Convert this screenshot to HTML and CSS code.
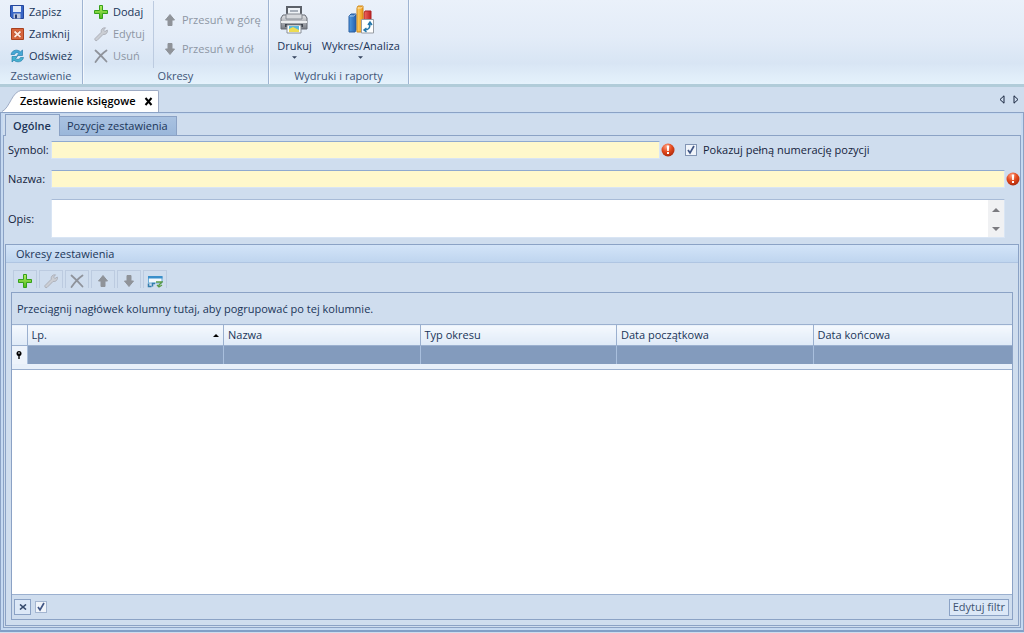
FILE: index.html
```html
<!DOCTYPE html>
<html lang="pl">
<head>
<meta charset="utf-8">
<title>Zestawienie księgowe</title>
<link rel="stylesheet" href="styles.css">
</head>
<body>
<svg class="defs" aria-hidden="true">
  <defs>
    <linearGradient id="green" x2="0" y2="1"><stop stop-color="#b5ee62"/><stop offset="1" stop-color="#4fb91c"/></linearGradient>
    <linearGradient id="blue" x2="1" y2="0"><stop stop-color="#4f9be2"/><stop offset="1" stop-color="#2560ae"/></linearGradient>
    <linearGradient id="gold" x2="1" y2="0"><stop stop-color="#ffd269"/><stop offset="1" stop-color="#ed9a18"/></linearGradient>
    <linearGradient id="redbar" x2="1" y2="0"><stop stop-color="#f16a62"/><stop offset="1" stop-color="#bd2020"/></linearGradient>
    <linearGradient id="metal" x2="0" y2="1"><stop stop-color="#e3e5e8"/><stop offset="1" stop-color="#777c84"/></linearGradient>
    <radialGradient id="ball" cx=".4" cy=".25" r=".8"><stop stop-color="#ffa183"/><stop offset=".5" stop-color="#e34a1e"/><stop offset="1" stop-color="#a52508"/></radialGradient>
    <symbol id="plus" viewBox="0 0 16 16"><path d="M6.500 1.500h3v5h5v3h-5v5h-3v-5h-5v-3h5z" fill="url(#green)" stroke="#35a01b"/></symbol>
    <symbol id="wrench" viewBox="0 0 16 16"><path d="M2 12.500 8.200 6.300C7.800 3.500 9.500 1.500 12.500 1.800L10.600 4l1.200 1.600L14.300 4c.6 3-1.500 4.900-4.200 4.400L4 14.500c-1.500.7-2.600-.6-2-2z" fill="#cbced4" stroke="#a9adb6" stroke-width=".9"/></symbol>
    <symbol id="cross" viewBox="0 0 16 16"><path d="M2.500 2.500C6 5.500 10 9.500 13.500 13.500M13.500 2.500C9 5.500 6 9 2.500 14" fill="none" stroke="#8f939b" stroke-width="1.800" stroke-linecap="round"/></symbol>
    <symbol id="up" viewBox="0 0 16 16"><path d="M8 2.500 12.500 8H10v5.500H6V8H3.500z" fill="#8f9399" stroke="#8f9399" stroke-linejoin="round"/></symbol>
    <symbol id="down" viewBox="0 0 16 16"><path d="M8 13.500 12.500 8H10V2.500H6V8H3.500z" fill="#8f9399" stroke="#8f9399" stroke-linejoin="round"/></symbol>
    <symbol id="alert" viewBox="0 0 14 14"><circle cx="7" cy="7" r="6.500" fill="url(#ball)"/><path d="M5.800 2.500h2.400L7.800 8H6.200zM6 9h2v2H6z" fill="#fff"/></symbol>
    <symbol id="caret" viewBox="0 0 6 4"><path d="M0 0h6L3 3z" fill="#33425c"/></symbol>
  </defs>
</svg>

<div class="app">
  <header class="ribbon">
    <section class="group group-report">
      <div class="commands">
        <div class="stack">
          <button class="cmd"><svg class="icon" viewBox="0 0 16 16"><path d="M1.500 1.500h13v13H3.500l-2-2z" fill="#3765c5" stroke="#24469c"/><path d="M4 2h8v6H4z" fill="#e3ebf8"/><path d="M4.500 9.500h7v5h-7z" fill="#bdc7dc"/><path d="M6 10.500h2v4H6z" fill="#253d75"/></svg>Zapisz</button>
          <button class="cmd"><svg class="icon" viewBox="0 0 16 16"><path d="M2.500 2.500h12v11h-12z" fill="#d7653d" stroke="#a8411f"/><path d="M5.500 5.500l6 5.500M11.500 5.500l-6 5.500" stroke="#a8411f" stroke-width="3"/><path d="M5.500 5.500l6 5.500M11.500 5.500l-6 5.500" stroke="#ffe9df" stroke-width="1.800"/></svg>Zamknij</button>
          <button class="cmd"><svg class="icon" viewBox="0 0 16 16"><path d="M2 6.500C3 1.800 8.500 1 11.500 3.800L13.500 2v5.500H8l2-2C8 4 6.200 4.500 5.500 6.500z" fill="#45a8d6" stroke="#267fae" stroke-width=".7"/><path d="M14.500 9.500c-1 4.700-6.500 5.500-9.500 2.700L3 14V8.500h5.500l-2 2c2 1.500 4.300 1 5-1z" fill="#45b2d0" stroke="#267fae" stroke-width=".7"/></svg>Odśwież</button>
        </div>
      </div>
      <h2 class="caption">Zestawienie</h2>
    </section>
    <section class="group group-periods">
      <div class="commands">
        <div class="stack stack-edit">
          <button class="cmd"><svg class="icon"><use href="#plus"/></svg>Dodaj</button>
          <button class="cmd" disabled><svg class="icon"><use href="#wrench"/></svg>Edytuj</button>
          <button class="cmd" disabled><svg class="icon"><use href="#cross"/></svg>Usuń</button>
        </div>
        <div class="stack stack-move">
          <button class="cmd" disabled><svg class="icon"><use href="#up"/></svg>Przesuń w górę</button>
          <button class="cmd" disabled><svg class="icon"><use href="#down"/></svg>Przesuń w dół</button>
        </div>
      </div>
      <h2 class="caption">Okresy</h2>
    </section>
    <section class="group group-print">
      <div class="commands">
        <button class="big">
          <svg class="big-icon" viewBox="0 0 32 32"><path d="M8 2h16v12H8z" fill="#5c6169"/><path d="M10 4h12v9H10z" fill="#eef2f6"/><path d="M12 6h8v2h-8z" fill="#a8b0bb"/><path d="M5 11 3 14v11h26V14l-2-3z" fill="url(#metal)" stroke="#666b73"/><path d="M8 10h16v5H8z" fill="#d6d9dd" stroke="#858a92"/><path d="M3 17h26v2H3z" fill="#eceef0"/><path d="M7 20h18v3H7z" fill="#3f444d"/><path d="M9 21h14v8H9z" fill="#fff" stroke="#888e96"/><path d="M11 22h10v6H11z" fill="#59b9df"/><path d="M11 28v-3l4-2 6 3v2z" fill="#eddc52"/></svg>
          <span>Drukuj</span><svg class="caret"><use href="#caret"/></svg>
        </button>
        <button class="big">
          <svg class="big-icon" viewBox="0 0 32 32"><path d="M4 12l2-2h5v16l-1 2H4z" fill="url(#blue)" stroke="#285d9f"/><path d="M19 9l1-2h6v19h-7z" fill="url(#redbar)" stroke="#ad2525"/><path d="M12 4l1-2h5v24l-1 2h-5z" fill="url(#gold)" stroke="#cf8717"/><path d="M4.500 12h4l2-1.500M12.500 4h4l1-1.500" fill="none" stroke="#ffffff99"/><path d="M16.500 15.500h12V29h-12z" fill="#fff" stroke="#979ca3"/><path d="M19 26c5 0 6-2 6-7M23 21l2-3 2 3M21.500 24 19 26l2.500 2" fill="none" stroke="#2678ab" stroke-width="1.500"/></svg>
          <span>Wykres/Analiza</span><svg class="caret"><use href="#caret"/></svg>
        </button>
      </div>
      <h2 class="caption">Wydruki i raporty</h2>
    </section>
  </header>

  <nav class="documents">
    <div class="doc-tab">
      <svg class="doc-slope" viewBox="0 0 20 22" preserveAspectRatio="none"><path d="M0 22C8 18 10 .5 20 .5V22z" fill="#fff"/><path d="M0 21.500C8 18 10 .5 20 .5" fill="none" stroke="#9eabc4"/></svg>
      <div class="doc-label"><span>Zestawienie księgowe</span>
        <button class="doc-close" aria-label="Zamknij kartę"><svg viewBox="0 0 9 9"><path d="M1.500 1l6 7M7.500 1l-6 7" stroke="#000" stroke-width="2"/></svg></button></div>
    </div>
    <div class="doc-arrows">
      <button aria-label="Poprzednia"><svg viewBox="0 0 6 9"><path d="M5 .8v7.400L1 4.500z" fill="none" stroke="#16233c"/></svg></button>
      <button aria-label="Następna"><svg viewBox="0 0 6 9"><path d="M1 .8v7.400L5 4.500z" fill="none" stroke="#16233c"/></svg></button>
    </div>
  </nav>

  <main class="document">
    <div class="tabs" role="tablist">
      <button class="tab tab-active" role="tab" aria-selected="true">Ogólne</button>
      <button class="tab" role="tab" aria-selected="false">Pozycje zestawienia</button>
    </div>
    <div class="page">
      <form class="form">
        <div class="row row-symbol">
          <label for="symbol">Symbol:</label>
          <input class="field" id="symbol" type="text">
          <svg class="alert"><use href="#alert"/></svg>
          <label class="option"><input class="check" type="checkbox" checked>Pokazuj pełną numerację pozycji</label>
        </div>
        <div class="row">
          <label for="name">Nazwa:</label>
          <input class="field" id="name" type="text">
          <svg class="alert"><use href="#alert"/></svg>
        </div>
        <div class="row row-text">
          <label for="description">Opis:</label>
          <div class="memo"><textarea id="description"></textarea>
            <div class="scroll"><svg viewBox="0 0 8 5"><path d="M4 0l4 4H0z" fill="#7b7b80"/></svg><svg viewBox="0 0 8 5"><path d="M4 4l4-4H0z" fill="#7b7b80"/></svg></div></div>
        </div>
      </form>

      <section class="periods">
        <h3 class="periods-title">Okresy zestawienia</h3>
        <div class="periods-body">
          <div class="toolbar">
            <button class="tool" aria-label="Dodaj"><svg><use href="#plus"/></svg></button>
            <button class="tool" aria-label="Edytuj"><svg><use href="#wrench"/></svg></button>
            <button class="tool" aria-label="Usuń"><svg><use href="#cross"/></svg></button>
            <button class="tool" aria-label="W górę"><svg><use href="#up"/></svg></button>
            <button class="tool" aria-label="W dół"><svg><use href="#down"/></svg></button>
            <button class="tool" aria-label="Widok"><svg viewBox="0 0 16 16"><path d="M1.500 3.500h13.500V10H1.500z" fill="#f4f9fd" stroke="#6caed9"/><path d="M1 3h14.500v2.500H1z" fill="#3a8fca"/><path d="M1.500 10.500v3h3M5.500 13.500v-3H8" fill="none" stroke="#347ead" stroke-width="1.500"/><path d="M9 9h6l-3 3v2M10 12l2 2 3-2" fill="none" stroke="#5a9b45" stroke-width="1.300"/></svg></button>
          </div>
          <div class="grid">
            <p class="grid-hint">Przeciągnij nagłówek kolumny tutaj, aby pogrupować po tej kolumnie.</p>
            <table class="grid-table">
              <colgroup><col class="col-mark"><col class="col"><col class="col"><col class="col"><col class="col"><col></colgroup>
              <thead><tr><th></th><th><div class="sorted">Lp.<svg viewBox="0 0 6 3"><path d="M0 3l3-3 3 3z"/></svg></div></th><th>Nazwa</th><th>Typ okresu</th><th>Data początkowa</th><th>Data końcowa</th></tr></thead>
              <tbody><tr><td class="mark"><svg viewBox="0 0 6 8"><circle cx="3" cy="2.500" r="2.500"/><circle cx="3" cy="2" r=".8" fill="#fff"/><path d="M2.300 4h1.400v4H2.300z"/></svg></td><td></td><td></td><td></td><td></td><td></td></tr></tbody>
            </table>
            <div class="grid-space"></div>
            <footer class="grid-footer">
              <button class="clear" aria-label="Wyczyść filtr"><svg viewBox="0 0 8 6"><path d="M1 .5l6 5M7 .5l-6 5" stroke="#364a6c" stroke-width="1.600"/></svg></button>
              <input class="check check-filter" type="checkbox" checked aria-label="Filtr aktywny">
              <button class="edit-filter">Edytuj filtr</button>
            </footer>
          </div>
        </div>
      </section>
    </div>
  </main>
</div>
</body>
</html>
```
FILE: styles.css
```css
:root {
  --face: #cfddee;
  --line: #8ba2c5;
  --ink: #203558;
}

* { box-sizing: border-box; }

body {
  margin: 0;
  background: var(--face);
  color: var(--ink);
  font: 11px/16px "Open Sans", "Noto Sans", sans-serif;
}

button, input, textarea { font: inherit; color: inherit; }
button { border: 0; padding: 0; background: none; }
svg { display: block; flex: none; }
h2, h3, p { margin: 0; font-size: inherit; font-weight: normal; }

.defs { position: absolute; width: 0; height: 0; }
.app { display: flex; flex-direction: column; min-height: 100vh; padding-bottom: 1px; }

/* Ribbon */
.ribbon {
  display: flex;
  height: 87px;
  border-bottom: 3px solid #b1ccd9;
  background: linear-gradient(#eaf1fa, #e3ecf8 45%, #d8e5f4 75%, #e5f2fc);
}
.group { display: flex; flex-direction: column; border-right: 1px solid #9fb4d2; box-shadow: 1px 0 #f3f8fd; }
.group-report { width: 83px; }
.group-periods { width: 186px; }
.group-print { width: 140px; }
.commands { display: flex; flex: 1; padding-top: 1px; }
.caption { height: 16px; text-align: center; color: #3e5578; }
.stack { display: flex; flex-direction: column; padding-left: 9px; }
.stack-edit { width: 71px; padding-left: 10px; border-right: 1px solid #bccbe0; }
.stack-move { padding: 4px 0 0 8px; }
.stack-move .cmd { height: 29px; }
.cmd { display: flex; align-items: center; gap: 4px; height: 22px; white-space: nowrap; }
.cmd:disabled { color: #8d96a4; }
.icon { width: 16px; height: 16px; }
.group-print .commands { gap: 10px; padding: 4px 10px 0; justify-content: center; }
.big { display: flex; flex-direction: column; align-items: center; justify-content: flex-start; }
.big-icon { width: 32px; height: 32px; }
.big span { margin-top: 2px; }
.caret { width: 5px; height: 4px; margin-top: 2px; }

/* Document tabs */
.documents { display: flex; justify-content: space-between; align-items: flex-end; height: 25px; padding: 0 5px 0 2px; }
.doc-tab { display: flex; color: #000; font-weight: 600; }
.doc-slope { width: 20px; height: 22px; }
.doc-label {
  display: flex;
  align-items: center;
  gap: 8px;
  height: 22px;
  padding-right: 5px;
  margin-left: -2px;
  border: solid #9eabc4;
  border-width: 1px 1px 0 0;
  border-radius: 0 2px 0 0;
  background: #fff;
}
.doc-label span { margin-bottom: 2px; }
.doc-close svg { width: 9px; height: 9px; }
.doc-arrows { display: flex; gap: 8px; padding-bottom: 8px; }
.doc-arrows svg { width: 6px; height: 9px; }

.document {
  display: flex;
  flex: 1;
  flex-direction: column;
  padding: 1px 2px 2px;
  border: 1px solid var(--line);
  border-bottom: 2px solid #819fc7;
  background: #c5d9f1;
}
.tabs { display: flex; align-items: flex-end; height: 21px; padding-left: 2px; background: var(--face); }
.tab {
  height: 19px;
  padding: 0 8px 0 7px;
  border: solid var(--line);
  border-width: 1px 1px 0 0;
  background: linear-gradient(#a9c2e1, #9bb7da);
}
.tab-active { height: 22px; margin-bottom: -1px; border-left-width: 1px; background: var(--face); font-weight: 600; z-index: 1; }
.page {
  display: flex;
  flex: 1;
  flex-direction: column;
  padding: 5px 1px 1px 2px;
  border: 1px solid var(--line);
  background: var(--face);
}

/* Form */
.form { color: #14233c; }
.row { display: flex; align-items: center; height: 18px; padding-right: 14px; margin-bottom: 11px; }
.row > label:first-child { width: 45px; padding-left: 2px; }
.field {
  flex: 1;
  min-width: 0;
  height: 18px;
  border: 1px solid #d9e5f4;
  border-top-color: #8fa9cf;
  background: #fff8cb;
}
.alert { width: 14px; height: 14px; margin: 0 -15px 0 1px; }
.row-symbol .field { flex: 0 1 609px; }
.row-symbol .alert { margin: 0 10px 0 1px; }
.option { display: flex; align-items: center; gap: 6px; white-space: nowrap; }
.check {
  width: 12px;
  height: 12px;
  margin: 0;
  appearance: none;
  border: 1px solid #8295b4;
  background: #f0f4fa url("data:image/svg+xml,%3Csvg xmlns='http://www.w3.org/2000/svg' viewBox='0 0 10 10'%3E%3Cpath d='M2 5l2 3 4-7' fill='none' stroke='%23405685' stroke-width='1.700'/%3E%3C/svg%3E") center / 10px no-repeat;
}
.row-text { height: 39px; margin-bottom: 6px; }
.memo { display: flex; flex: 1; height: 39px; border: 1px solid #d9e5f4; border-top-color: #a8bbd7; background: #fff; }
.memo textarea { flex: 1; border: 0; resize: none; overflow: hidden; }
.scroll { display: flex; flex-direction: column; justify-content: space-between; align-items: center; width: 16px; padding: 8px 0 5px; background: #f0f1f3; }
.scroll svg { width: 8px; height: 5px; }

/* Periods panel */
.periods { display: flex; flex: 1; flex-direction: column; margin-left: -1px; border: 1px solid var(--line); }
.periods-title {
  height: 18px;
  padding-left: 10px;
  border-bottom: 1px solid #afc5e2;
  background: linear-gradient(#d3e4f8, #bfd5ef);
  line-height: 18px;
}
.periods-body { display: flex; flex: 1; flex-direction: column; padding: 7px 5px 5px; }
.toolbar { display: flex; gap: 2px; height: 22px; padding-left: 2px; }
.tool { display: flex; align-items: center; justify-content: center; width: 24px; height: 18px; padding-top: 3px; border: 1px solid #bccbe0; border-bottom: 0; }
.tool svg { width: 16px; height: 16px; }
.grid { display: flex; flex: 1; flex-direction: column; border: 1px solid var(--line); }
.grid-hint { height: 31px; padding: 8px 5px 0; }
.grid-table { width: 100%; border-collapse: collapse; table-layout: fixed; border-bottom: 5px solid #e8f0fa; }
.col-mark { width: 15px; }
.col { width: 19.65%; }
.grid-table th {
  height: 21px;
  padding: 0 4px;
  border: solid #9bb0cf;
  border-width: 1px 1px 1px 0;
  background: linear-gradient(#f5f9fe, #dfeaf7);
  font-weight: normal;
  text-align: left;
}
.grid-table td { height: 21px; padding: 0; border-right: 1px solid #a9bfdd; background: #839bbd; }
.grid-table th:last-child, .grid-table td:last-child { border-right: 0; }
.grid-table .mark { background: #edf3fb; border-bottom: 1px solid #9bb0cf; }
.mark svg { width: 6px; height: 8px; margin: 0 auto; fill: #000; }
.sorted { display: flex; align-items: center; justify-content: space-between; }
.sorted svg { width: 6px; height: 3px; fill: #000; }
.grid-space { flex: 1; min-height: 60px; border: solid #9bb0cf; border-width: 1px 0; background: #fff; }
.grid-footer { display: flex; align-items: center; gap: 4px; height: 24px; padding: 0 3px 0 2px; }
.clear { display: flex; align-items: center; justify-content: center; width: 17px; height: 16px; border: 1px solid #8ba2c5; background: #dce8f7; }
.clear svg { width: 8px; height: 6px; }
.check-filter { border-color: #a3b5d0; }
.edit-filter { height: 17px; margin-left: auto; padding: 0 3px; border: 1px solid #8ba2c5; background: #dce8f7; line-height: 14px; color: #405472; }
```
